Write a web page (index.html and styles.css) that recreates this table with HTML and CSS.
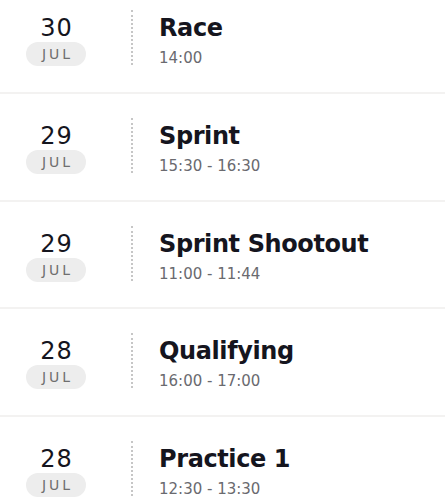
FILE: index.html
```html
<!DOCTYPE html>
<html>
<head>
<meta charset="utf-8">
<link rel="stylesheet" href="styles.css">
</head>
<body>
<ul class="schedule">
  <li class="event">
    <div class="date"><span class="day">30</span><span class="month">JUL</span></div>
    <div class="info"><span class="title">Race</span><span class="time">14:00</span></div>
  </li>
  <li class="event">
    <div class="date"><span class="day">29</span><span class="month">JUL</span></div>
    <div class="info"><span class="title">Sprint</span><span class="time">15:30 - 16:30</span></div>
  </li>
  <li class="event">
    <div class="date"><span class="day">29</span><span class="month">JUL</span></div>
    <div class="info"><span class="title">Sprint Shootout</span><span class="time">11:00 - 11:44</span></div>
  </li>
  <li class="event">
    <div class="date"><span class="day">28</span><span class="month">JUL</span></div>
    <div class="info"><span class="title">Qualifying</span><span class="time">16:00 - 17:00</span></div>
  </li>
  <li class="event">
    <div class="date"><span class="day">28</span><span class="month">JUL</span></div>
    <div class="info"><span class="title">Practice 1</span><span class="time">12:30 - 13:30</span></div>
  </li>
</ul>
</body>
</html>
```
FILE: styles.css
```css
html, body {
  margin: 0;
  padding: 0;
  background: #ffffff;
  font-family: "DejaVu Sans", sans-serif;
}
.schedule {
  list-style: none;
  margin: -13.67px 0 0 0;
  padding: 0;
}
.event {
  display: flex;
  align-items: flex-start;
  height: 105.67px;
  box-sizing: content-box;
  border-bottom: 2px solid #f3f2f1;
  padding: 0 0 0 26px;
}
.date {
  width: 60px;
  margin-top: 28px;
  display: flex;
  flex-direction: column;
  align-items: center;
}
.day {
  font-size: 24px;
  line-height: 28px;
  height: 28px;
  color: #15151e;
  letter-spacing: 1px;
  padding-left: 1px;
}
.month {
  width: 60px;
  height: 24px;
  line-height: 24px;
  border-radius: 12px;
  background: #ededed;
  color: #6f6f6f;
  font-size: 14px;
  letter-spacing: 3px;
  padding-left: 3px;
  box-sizing: border-box;
  text-align: center;
}
.info {
  margin-left: 45px;
  margin-top: 24px;
  height: 55px;
  border-left: 2px dotted #c6c6c6;
  padding-left: 26px;
  display: flex;
  flex-direction: column;
}
.title {
  margin-top: 4px;
  font-size: 24px;
  line-height: 28px;
  font-weight: bold;
  color: #15151e;
  letter-spacing: -0.4px;
}
.time {
  margin-top: 7px;
  font-size: 15px;
  line-height: 18px;
  color: #6a6a6f;
}
```
